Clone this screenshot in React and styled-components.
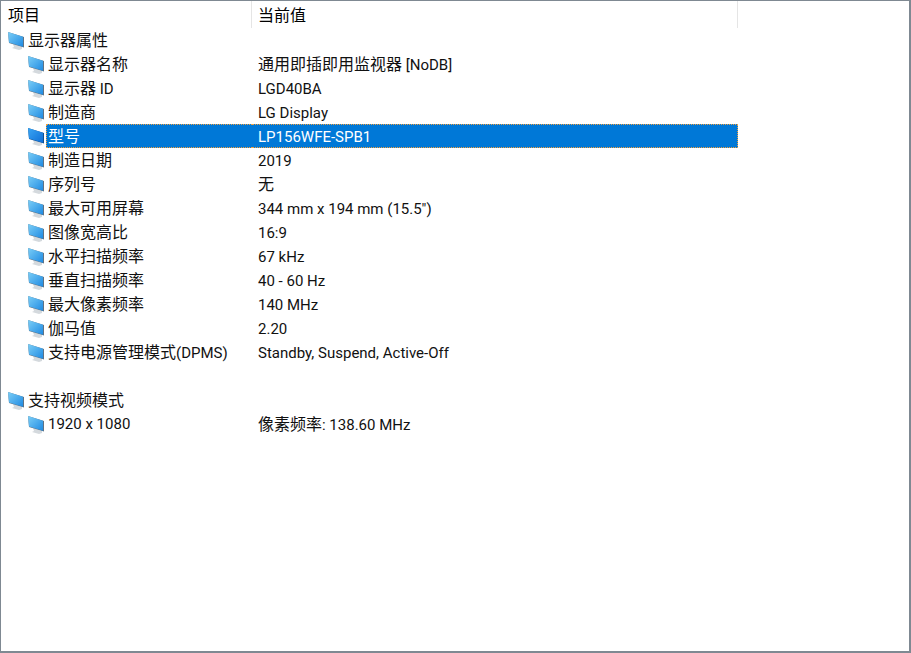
import { createGlobalStyle, css, styled } from "styled-components";

const GlobalStyle = createGlobalStyle`
  html, body {
    margin: 0;
    padding: 0;
    background: #fff;
  }
`;

const Window = styled.div`
  box-sizing: border-box;
  width: 911px;
  height: 653px;
  overflow: hidden;
  background: #fff;
  border: 1px solid #7f8992;
  border-right-width: 2px;
  border-bottom-width: 2px;
  font-family: Roboto, "Noto Sans CJK SC", sans-serif;
  font-size: 15px;
  color: #111;
`;

const Han = styled.span`
  font-size: 16px;
`;

const Header = styled.div`
  display: grid;
  grid-template-columns: 251px 486px;
  height: 27px;
`;

const HeaderCell = styled.div`
  box-sizing: border-box;
  height: 27px;
  padding-left: ${(p) => p.$indent}px;
  line-height: 30px;
  border-right: 1px solid #e5e5e5;
  color: #000;
  white-space: nowrap;
`;

const Row = styled.div`
  display: grid;
  grid-template-columns: 251px 486px;
  height: 24px;
  white-space: nowrap;
`;

const NameCell = styled.div`
  display: flex;
  align-items: center;
  padding-left: ${(p) => (p.$child ? 26 : 6)}px;
`;

const selectedCell = css`
  color: #fff;
  background: #0078d7;
  border: 1px dotted #f0a040;
`;

const Label = styled.span`
  box-sizing: border-box;
  height: 24px;
  flex: 1;
  padding-left: 2px;
  margin-left: 1px;
  line-height: 25px;
  ${(p) =>
    p.$selected &&
    css`
      ${selectedCell}
      border-right: 0;
      padding-left: 1px;
      line-height: 23px;
    `}
`;

const ValueCell = styled.div`
  box-sizing: border-box;
  height: 24px;
  padding-left: 6px;
  line-height: 26px;
  ${(p) =>
    p.$selected &&
    css`
      ${selectedCell}
      border-left: 0;
      line-height: 24px;
    `}
`;

const Spacer = styled.div`
  height: 24px;
`;

// han glyphs run a pixel larger than the latin ones in this list view
function Text({ children }) {
  return children
    .split(/([\u4e00-\u9fff]+)/)
    .map((part, i) => (i % 2 ? <Han key={i}>{part}</Han> : part));
}

function MonitorIcon({ selected }) {
  const id = selected ? "screenSel" : "screen";
  return (
    <svg width="18" height="22" viewBox="0 0 18 22" style={{ flex: "none" }}>
      <defs>
        <linearGradient id={id} x1="0" y1="0" x2="1" y2="1">
          <stop offset="0" stopColor={selected ? "#3aa6f4" : "#7ccff7"} />
          <stop offset="1" stopColor={selected ? "#0f6ed6" : "#1f8ae2"} />
        </linearGradient>
      </defs>
      <path d="M6 15 L15 18 L15 20 L12 21 L5 19 L7 18 Z" fill="#c6ccd2" opacity="0.75" />
      <path d="M1 3 L17 8 L17 18.5 L2 14 Z" fill={selected ? "#11508f" : "#5f7283"} />
      <path d="M1 3 L16 7.7 L16 17.8 L2 13.6 Z" fill={`url(#${id})`} />
    </svg>
  );
}

const rows = [
  { name: "显示器属性", value: "" },
  { name: "显示器名称", value: "通用即插即用监视器 [NoDB]", child: true },
  { name: "显示器 ID", value: "LGD40BA", child: true },
  { name: "制造商", value: "LG Display", child: true },
  { name: "型号", value: "LP156WFE-SPB1", child: true, selected: true },
  { name: "制造日期", value: "2019", child: true },
  { name: "序列号", value: "无", child: true },
  { name: "最大可用屏幕", value: "344 mm x 194 mm (15.5\")", child: true },
  { name: "图像宽高比", value: "16:9", child: true },
  { name: "水平扫描频率", value: "67 kHz", child: true },
  { name: "垂直扫描频率", value: "40 - 60 Hz", child: true },
  { name: "最大像素频率", value: "140 MHz", child: true },
  { name: "伽马值", value: "2.20", child: true },
  { name: "支持电源管理模式(DPMS)", value: "Standby, Suspend, Active-Off", child: true },
  null,
  { name: "支持视频模式", value: "" },
  { name: "1920 x 1080", value: "像素频率: 138.60 MHz", child: true },
];

export default function App() {
  return (
    <Window>
      <GlobalStyle />
      <Header>
        <HeaderCell $indent={7}><Han>项目</Han></HeaderCell>
        <HeaderCell $indent={6}><Han>当前值</Han></HeaderCell>
      </Header>
      {rows.map((row, i) =>
        row ? (
          <Row key={i}>
            <NameCell $child={row.child}>
              <MonitorIcon selected={row.selected} />
              <Label $selected={row.selected}><Text>{row.name}</Text></Label>
            </NameCell>
            <ValueCell $selected={row.selected}><Text>{row.value}</Text></ValueCell>
          </Row>
        ) : (
          <Spacer key={i} />
        )
      )}
    </Window>
  );
}
